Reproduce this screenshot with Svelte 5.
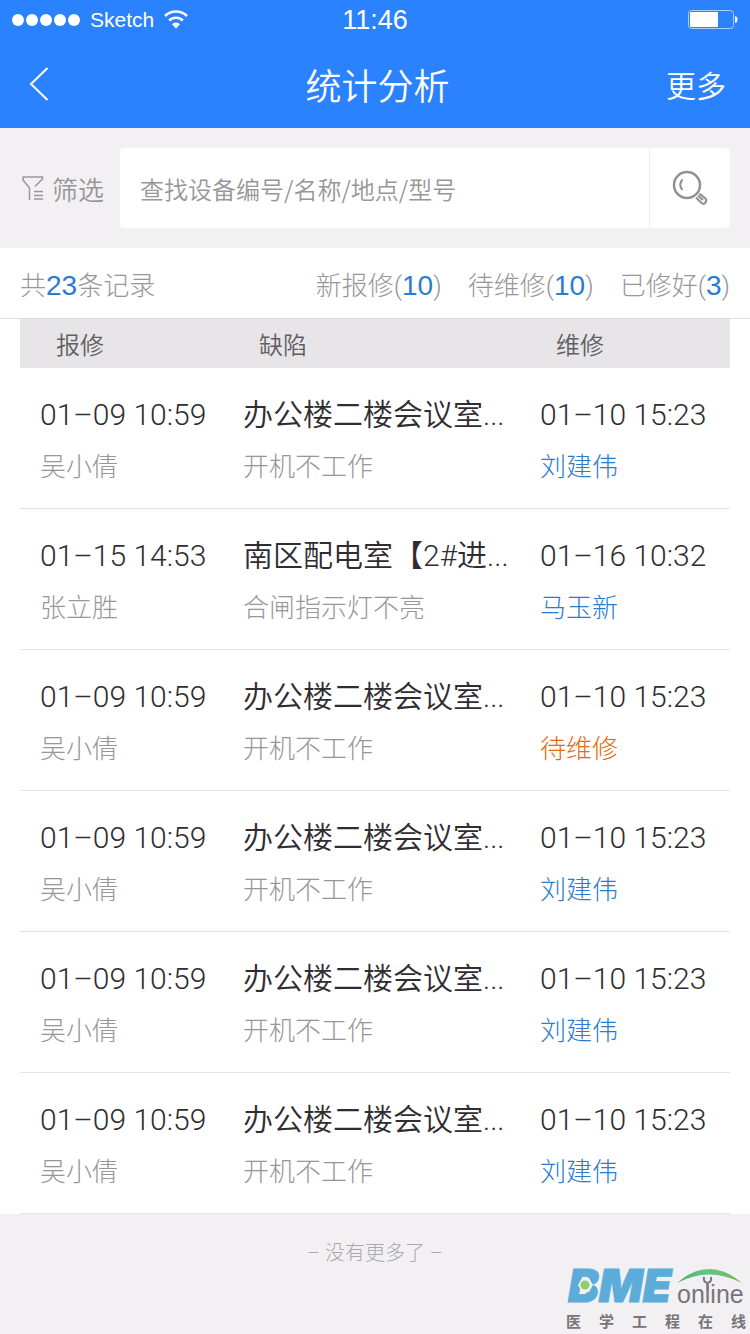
<script lang="ts">
  interface Repair {
    reportedAt: string;
    reporter: string;
    place: string;
    fault: string;
    repairedAt: string;
    repairer?: string;
  }

  const total = 23;

  const counts = [
    { label: '新报修', value: 10 },
    { label: '待维修', value: 10 },
    { label: '已修好', value: 3 }
  ];

  const meetingRoom: Repair = {
    reportedAt: '01–09 10:59',
    reporter: '吴小倩',
    place: '办公楼二楼会议室...',
    fault: '开机不工作',
    repairedAt: '01–10 15:23',
    repairer: '刘建伟'
  };

  const repairs: Repair[] = [
    meetingRoom,
    {
      reportedAt: '01–15 14:53',
      reporter: '张立胜',
      place: '南区配电室【2#进...',
      fault: '合闸指示灯不亮',
      repairedAt: '01–16 10:32',
      repairer: '马玉新'
    },
    { ...meetingRoom, repairer: undefined },
    meetingRoom,
    meetingRoom,
    meetingRoom
  ];

  let keyword = $state('');
</script>

<div class="page">
  <header>
    <div class="status">
      <div class="carrier">
        <span class="dots">
          {#each Array(5) as _}
            <i></i>
          {/each}
        </span>
        <span>Sketch</span>
        <svg width="24" height="20" viewBox="0 0 24 20" fill="none" stroke="#fff" stroke-width="2.500">
          <path d="M1 6a15.500 15.500 0 0 1 22 0" />
          <path d="M5.200 10.500a9.600 9.600 0 0 1 13.600 0" />
          <path d="M12 18.500l-4-4.200a5.600 5.600 0 0 1 8 0z" fill="#fff" stroke="none" />
        </svg>
      </div>
      <span class="time">11:46</span>
      <svg class="battery" width="50" height="20" viewBox="0 0 50 20">
        <rect x="0.500" y="0.500" width="45" height="18" rx="3" fill="none" stroke="#a9cdff" />
        <rect x="2" y="2" width="28" height="15" rx="1" fill="#fff" />
        <path d="M47 6q2.500.5 2.500 3.500T47 13z" fill="#fff" />
      </svg>
    </div>
    <nav>
      <button class="back" aria-label="返回">
        <svg width="20" height="34" viewBox="0 0 20 34" fill="none" stroke="#fff" stroke-width="2">
          <path d="M18.500 1L2 17l16.500 16" />
        </svg>
      </button>
      <h1>统计分析</h1>
      <button class="more">更多</button>
    </nav>
  </header>

  <form class="search" onsubmit={(e) => e.preventDefault()}>
    <button type="button" class="filter">
      <svg width="22" height="26" viewBox="0 0 22 26" fill="none" stroke="#98969a" stroke-width="1.500">
        <path d="M7.500 25V13L1 5V2h19.500v2L13 11.500" />
        <path d="M12 16.500h9M12 20.500h9M12 24h9" />
      </svg>
      筛选
    </button>
    <div class="field">
      <input type="text" bind:value={keyword} aria-label="查找" placeholder="查找设备编号/名称/地点/型号" />
      <button type="submit" aria-label="搜索">
        <svg width="36" height="36" viewBox="0 0 36 36" fill="none" stroke="#929094" stroke-width="2.500">
          <circle cx="15" cy="15" r="13" />
          <path d="M10.500 9.500q-4.500 5 0 10.500" stroke-width="2" />
          <path d="M24 27.500l5.500 5.500q2.500 2 4-.5t0-4L27.500 23.500M26 25.500l5 4.500" stroke-width="2.200" />
        </svg>
      </button>
    </div>
  </form>

  <section class="summary">
    <span>共<b>{total}</b>条记录</span>
    <div class="counts">
      {#each counts as item}
        <span>{item.label}(<b>{item.value}</b>)</span>
      {/each}
    </div>
  </section>

  <main>
    <table>
      <thead>
        <tr>
          <th>报修</th>
          <th>缺陷</th>
          <th>维修</th>
        </tr>
      </thead>
      <tbody>
        {#each repairs as row}
          <tr>
            <td>
              <p class="main">{row.reportedAt}</p>
              <p class="sub">{row.reporter}</p>
            </td>
            <td>
              <p class="main">{row.place}</p>
              <p class="sub">{row.fault}</p>
            </td>
            <td>
              <p class="main">{row.repairedAt}</p>
              <p class="sub" class:done={row.repairer} class:waiting={!row.repairer}>
                {row.repairer ?? '待维修'}
              </p>
            </td>
          </tr>
        {/each}
      </tbody>
    </table>
  </main>

  <footer>
    <p>– 没有更多了 –</p>
    <div class="brand">
      <svg width="180" height="56" viewBox="0 0 180 56">
        <defs>
          <linearGradient id="arc">
            <stop offset="0" stop-color="#4fae62" />
            <stop offset="0.450" stop-color="#62c68a" />
            <stop offset="1" stop-color="#7db556" />
          </linearGradient>
        </defs>
        <text class="bme" x="2" y="45">BME</text>
        <path d="M12 28l4-7h7l4 7-4 7h-7z" fill="#f2f0f2" />
        <circle cx="19" cy="28" r="4.500" fill="#8fce6c" />
        <path d="M111 26q32-28 65 0-33-17-65 0z" fill="url(#arc)" />
        <text class="online" x="111" y="46">online</text>
        <path d="M138 20q-1 5 3.500 6 4.500-1 3.500-6M141.500 26v8" fill="none" stroke="#77757a" stroke-width="2" />
      </svg>
      <div class="slogan">
        {#each '医学工程在线' as char}
          <span>{char}</span>
        {/each}
      </div>
    </div>
  </footer>
</div>

<style>
  :global(body) {
    margin: 0;
    background: #f2f0f3;
  }

  .page {
    font-family: 'Noto Sans CJK SC', sans-serif;
    font-weight: 350;
    color: #98969a;
  }

  button {
    padding: 0;
    border: none;
    background: none;
    color: inherit;
    font: inherit;
    cursor: pointer;
  }

  svg {
    display: block;
  }

  p,
  h1 {
    margin: 0;
    font-weight: inherit;
  }

  header {
    background: #2a82ff;
    color: #fff;
  }

  .status,
  nav {
    display: grid;
    grid-template-columns: 1fr auto 1fr;
    align-items: center;
  }

  .status {
    height: 40px;
    padding: 0 12px;
    font-family: 'Liberation Sans', sans-serif;
    font-size: 21px;
  }

  .carrier {
    display: flex;
    align-items: center;
    gap: 10px;
  }

  .dots {
    display: flex;
    gap: 2px;
  }

  .dots i {
    width: 12px;
    height: 12px;
    border-radius: 50%;
    background: #fff;
  }

  .time {
    font-size: 27px;
  }

  .battery {
    justify-self: end;
  }

  nav {
    height: 88px;
    padding: 0 24px 0 29px;
  }

  .back {
    justify-self: start;
  }

  h1 {
    font-size: 36px;
    line-height: 52px;
  }

  .more {
    justify-self: end;
    font-size: 30px;
  }

  .search {
    display: flex;
    align-items: center;
    gap: 16px;
    padding: 20px 20px 20px 22px;
  }

  .filter {
    display: flex;
    align-items: center;
    gap: 8px;
    font-size: 26px;
  }

  .field {
    flex: 1;
    display: flex;
    height: 80px;
    border-radius: 4px;
    background: #fff;
    overflow: hidden;
  }

  .field input {
    flex: 1;
    min-width: 0;
    padding: 0 20px;
    border: none;
    outline: none;
    background: none;
    color: #333;
    font: inherit;
    font-size: 24px;
  }

  .field input::placeholder {
    color: #98969a;
    opacity: 1;
  }

  .field button {
    display: flex;
    align-items: center;
    justify-content: center;
    width: 81px;
    border-left: 1px solid #f2f0f3;
  }

  .summary {
    display: flex;
    align-items: center;
    justify-content: space-between;
    height: 70px;
    padding: 0 20px;
    border-bottom: 1px solid #dddcde;
    background: #fff;
    font-family: Roboto, 'Noto Sans CJK SC', sans-serif;
    font-size: 26px;
    font-weight: 300;
  }

  .summary b {
    color: #2b7bd0;
    font-family: 'Liberation Sans', sans-serif;
    font-size: 28px;
    font-weight: 400;
  }

  .counts {
    display: flex;
    gap: 26px;
  }

  main {
    padding: 0 20px;
    background: #fff;
  }

  table {
    width: 100%;
    table-layout: fixed;
    border-collapse: collapse;
  }

  th {
    height: 49px;
    padding: 0 0 0 36px;
    background: #e7e5e8;
    color: #605e62;
    font-size: 24px;
    font-weight: 350;
    line-height: 36px;
    text-align: left;
  }

  th:first-child {
    width: 167px;
  }

  th:last-child {
    width: 174px;
  }

  td {
    padding: 27px 0 25px 20px;
    border-bottom: 1px solid #e4e3e5;
    white-space: nowrap;
  }

  .main {
    color: #2f2d31;
    font-family: Roboto, 'Noto Sans CJK SC', sans-serif;
    font-size: 30px;
    line-height: 40px;
  }

  .sub {
    margin-top: 12px;
    font-size: 26px;
    font-weight: 300;
    line-height: 36px;
  }

  .done {
    color: #2b7bd0;
  }

  .waiting {
    color: #e8690b;
  }

  footer {
    position: relative;
    height: 120px;
    box-sizing: border-box;
    padding-top: 24px;
    color: #aaa8ac;
    font-family: Roboto, 'Noto Sans CJK SC', sans-serif;
    font-size: 20px;
    font-weight: 300;
    line-height: 30px;
    text-align: center;
  }

  .brand {
    position: absolute;
    right: 4px;
    bottom: 3px;
    width: 180px;
  }

  .bme {
    fill: #5bacd9;
    stroke: #5bacd9;
    stroke-width: 1px;
    font: italic 900 46px Inter, sans-serif;
  }

  .online {
    fill: #77757a;
    font: 25px 'Liberation Sans', sans-serif;
  }

  .slogan {
    display: flex;
    justify-content: space-between;
    margin-top: -2px;
    color: #77757a;
    font-family: 'Noto Sans CJK SC', sans-serif;
    font-size: 15px;
    font-weight: 700;
    line-height: 20px;
  }
</style>
